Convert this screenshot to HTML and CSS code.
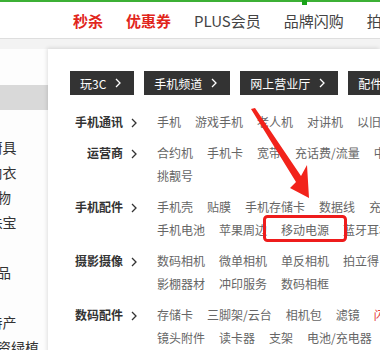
FILE: index.html
```html
<!DOCTYPE html>
<html lang="zh-CN">
<head>
    <meta charset="UTF-8">
    <meta name="viewport" content="width=device-width, initial-scale=1.0">
    <title>手机 / 运营商 / 数码</title>
    <link rel="stylesheet" href="styles.css">
</head>
<body>
    <div class="topline"><span class="topline-mark"></span></div>

    <div class="nav">
        <a class="nav-item hot">秒杀</a>
        <a class="nav-item hot">优惠券</a>
        <a class="nav-item">PLUS会员</a>
        <a class="nav-item">品牌闪购</a>
        <a class="nav-item">拍卖</a>
    </div>
    <div class="band"></div>

    <div class="main">
        <ul class="sidebar">
            <li>家用电器</li>
            <li class="active">手机/运营商/数码</li>
            <li>电脑/办公</li>
            <li>家居/家具/家装/厨具</li>
            <li>男装/女装/童装/内衣</li>
            <li>美妆/个护清洁/宠物</li>
            <li>女鞋/箱包/钟表/珠宝</li>
            <li>男鞋/运动/户外</li>
            <li>房产/汽车/汽车用品</li>
            <li>母婴/玩具乐器</li>
            <li>食品/酒类/生鲜/特产</li>
            <li>艺术/礼品鲜花/农资绿植</li>
        </ul>

        <div class="panel">
            <div class="channels">
                <a class="channel">玩3C<svg class="chev" width="6" height="10" viewBox="0 0 6 10"><polyline points="1,1 5,5 1,9"/></svg></a>
                <a class="channel">手机频道<svg class="chev" width="6" height="10" viewBox="0 0 6 10"><polyline points="1,1 5,5 1,9"/></svg></a>
                <a class="channel">网上营业厅<svg class="chev" width="6" height="10" viewBox="0 0 6 10"><polyline points="1,1 5,5 1,9"/></svg></a>
                <a class="channel">配件选购中心<svg class="chev" width="6" height="10" viewBox="0 0 6 10"><polyline points="1,1 5,5 1,9"/></svg></a>
            </div>

            <div class="cats">
                <dl class="cat">
                    <dt>手机通讯<svg class="chev" width="6" height="10" viewBox="0 0 6 10"><polyline points="1,1 5,5 1,9"/></svg></dt>
                    <dd>
                        <div class="line"><a>手机</a><a>游戏手机</a><a>老人机</a><a>对讲机</a><a>以旧换新</a><a>手机维修</a></div>
                    </dd>
                </dl>
                <dl class="cat">
                    <dt>运营商<svg class="chev" width="6" height="10" viewBox="0 0 6 10"><polyline points="1,1 5,5 1,9"/></svg></dt>
                    <dd>
                        <div class="line"><a>合约机</a><a>手机卡</a><a>宽带</a><a>充话费/流量</a><a>中国电信</a></div>
                        <div class="line"><a>挑靓号</a></div>
                    </dd>
                </dl>
                <dl class="cat">
                    <dt>手机配件<svg class="chev" width="6" height="10" viewBox="0 0 6 10"><polyline points="1,1 5,5 1,9"/></svg></dt>
                    <dd>
                        <div class="line"><a>手机壳</a><a>贴膜</a><a>手机存储卡</a><a>数据线</a><a>充电器</a></div>
                        <div class="line"><a>手机电池</a><a>苹果周边</a><a>移动电源</a><a>蓝牙耳机</a></div>
                    </dd>
                </dl>
                <dl class="cat">
                    <dt>摄影摄像<svg class="chev" width="6" height="10" viewBox="0 0 6 10"><polyline points="1,1 5,5 1,9"/></svg></dt>
                    <dd>
                        <div class="line"><a>数码相机</a><a>微单相机</a><a>单反相机</a><a>拍立得</a></div>
                        <div class="line"><a>影棚器材</a><a>冲印服务</a><a>数码相框</a></div>
                    </dd>
                </dl>
                <dl class="cat">
                    <dt>数码配件<svg class="chev" width="6" height="10" viewBox="0 0 6 10"><polyline points="1,1 5,5 1,9"/></svg></dt>
                    <dd>
                        <div class="line"><a>存储卡</a><a>三脚架/云台</a><a>相机包</a><a>滤镜</a><a class="red">闪光灯</a></div>
                        <div class="line"><a>镜头附件</a><a>读卡器</a><a>支架</a><a>电池/充电器</a></div>
                    </dd>
                </dl>
            </div>
        </div>
    </div>

    <!-- annotation drawn over the menu -->
    <svg class="annot" width="380" height="350" viewBox="0 0 380 350">
        <polygon class="arrow" points="251,109 255,108 301,176 307,165 309,198 290,188 296,182"/>
        <rect class="mark" x="264.5" y="216.5" width="81" height="24" rx="3"/>
    </svg>
</body>
</html>
```

FILE: styles.css
```css
html, body {
    overflow: hidden;
}

body {
    margin: 0;
    width: 380px;
    height: 350px;
    position: relative;
    font-family: "Noto Sans CJK SC", "Liberation Sans", sans-serif;
    color: #333;
    background-color: #fff;
}

a {
    text-decoration: none;
    color: inherit;
}

.topline {
    height: 2px;
    background-color: #3cb035;
    position: relative;
}

.topline-mark {
    position: absolute;
    left: 302px;
    top: 0;
    width: 5px;
    height: 5px;
    background-color: #1aa31a;
}

.nav {
    display: flex;
    gap: 23px;
    height: 36px;
    padding-left: 73px;
    align-items: center;
    white-space: nowrap;
    border-bottom: 1px solid #dedede;
}

.nav-item {
    font-size: 15px;
    color: #444;
    flex-shrink: 0;
}

.nav-item.hot {
    color: #e1251b;
    font-weight: bold;
}

.band {
    height: 10px;
    background-color: #f3f3f3;
}

.main {
    display: flex;
    height: 310px;
}

.sidebar {
    width: 48px;
    flex-shrink: 0;
    margin: 0;
    padding: 11px 0 0;
    list-style: none;
    overflow: hidden;
    background-color: #fdfdfd;
}

.sidebar li {
    height: 25px;
    line-height: 25px;
    font-size: 14px;
    white-space: nowrap;
    text-indent: -112px;
    color: #333;
}

.sidebar li.active {
    background-color: #d9d9d9;
}

.panel {
    flex: 1;
    padding: 22px 0 0 22px;
    background-color: #fff;
    box-shadow: -1px -1px 4px rgba(0, 0, 0, 0.12);
    white-space: nowrap;
    overflow: hidden;
}

.channels {
    display: flex;
    gap: 10px;
}

.channel {
    display: flex;
    align-items: center;
    flex-shrink: 0;
    height: 24px;
    padding: 0 13px 0 10px;
    background-color: #333;
    color: #fff;
    font-size: 12px;
}

.chev {
    fill: none;
    stroke: currentColor;
    stroke-width: 1.3;
    margin-left: 9px;
}

.cats {
    padding-top: 15px;
}

.cat {
    display: flex;
    margin: 0 0 8px;
}

.cat dt {
    width: 67px;
    flex-shrink: 0;
    text-align: right;
    font-size: 12px;
    font-weight: bold;
    line-height: 23px;
    color: #333;
}

.cat dt .chev {
    margin-left: 8px;
    vertical-align: -1px;
}

.cat dd {
    margin: 0 0 0 20px;
}

.line {
    display: flex;
    gap: 14px;
    font-size: 12px;
    line-height: 23px;
    color: #666;
}

.line a {
    flex-shrink: 0;
}

.line a.red {
    color: #e4393c;
}

.annot {
    position: absolute;
    left: 0;
    top: 0;
    pointer-events: none;
}

.arrow {
    fill: #f2231b;
}

.mark {
    fill: none;
    stroke: #ee1c1c;
    stroke-width: 3;
}
```
